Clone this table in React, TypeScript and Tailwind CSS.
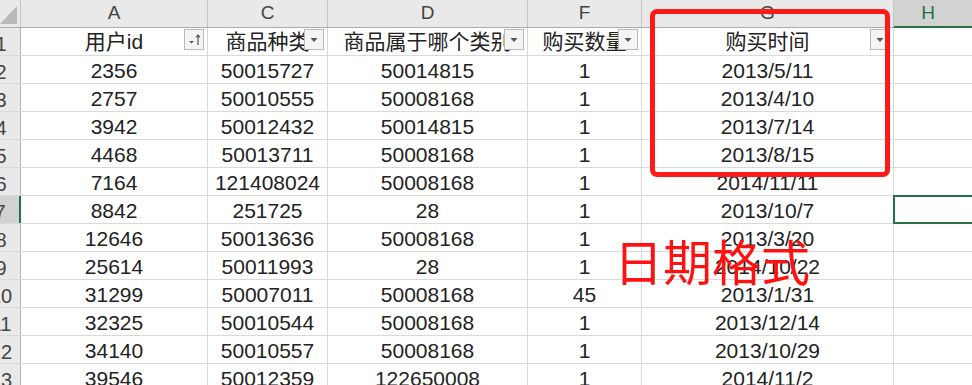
import React from 'react';

const font = { fontFamily: '"Liberation Sans", "Noto Sans CJK SC", sans-serif' };

const headers = ['用户id', '商品种类', '商品属于哪个类别', '购买数量', '购买时间'];

const rows: string[][] = [
  ['2356', '50015727', '50014815', '1', '2013/5/11'],
  ['2757', '50010555', '50008168', '1', '2013/4/10'],
  ['3942', '50012432', '50014815', '1', '2013/7/14'],
  ['4468', '50013711', '50008168', '1', '2013/8/15'],
  ['7164', '121408024', '50008168', '1', '2014/11/11'],
  ['8842', '251725', '28', '1', '2013/10/7'],
  ['12646', '50013636', '50008168', '1', '2013/3/20'],
  ['25614', '50011993', '28', '1', '2014/10/22'],
  ['31299', '50007011', '50008168', '45', '2013/1/31'],
  ['32325', '50010544', '50008168', '1', '2013/12/14'],
  ['34140', '50010557', '50008168', '1', '2013/10/29'],
  ['39546', '50012359', '122650008', '1', '2014/11/2'],
];

// column widths incl. right gridline
const colW = ['w-[187px]', 'w-[120px]', 'w-[200px]', 'w-[114px]', 'w-[252px]'];
const letters = ['A', 'C', 'D', 'F', 'G'];

function FilterButton({ sorted }: { sorted?: boolean }) {
  return (
    <span className="absolute right-[3px] top-[1px] w-[20px] h-[21px] border border-[#b9b9b9] bg-[#f4f4f4] flex items-center justify-center">
      <svg width="18" height="19" viewBox="0 0 18 19">
        {sorted ? (
          <>
            <path d="M4 11 L9 11 L6.5 13.5 Z" fill="#555" />
            <path d="M13 15 V5 M11 7.5 L13 5 L15 7.5" stroke="#555" strokeWidth="1.2" fill="none" />
          </>
        ) : (
          <path d="M5.5 8 L12.5 8 L9 12 Z" fill="#555" />
        )}
      </svg>
    </span>
  );
}

function RowHead({ n, active }: { n: number; active?: boolean }) {
  return (
    <div
      className={
        'w-[21px] h-full shrink-0 overflow-hidden flex justify-end items-end border-r ' +
        (active ? 'bg-[#d2d2d2] border-r-2 border-[#217346]' : 'bg-[#e9e9e9] border-[#b4b4b4]')
      }
    >
      <span className="w-[38px] shrink-0 text-center text-[20px] leading-[22px] text-[#444]">{n}</span>
    </div>
  );
}

export default function App() {
  return (
    <div className="relative w-[972px] h-[385px] overflow-hidden bg-white text-[#222]" style={font}>
      {/* column letters */}
      <div className="flex h-[28px] border-b border-[#ababab] bg-[#e9e9e9]">
        <div className="w-[21px] shrink-0 border-r border-[#c6c6c6] relative">
          <svg className="absolute left-0 top-0" width="20" height="27" viewBox="0 0 20 27">
            <path d="M0 24 L17 24 L17 6 Z" fill="#b9b9b9" />
          </svg>
        </div>
        {letters.map((l, i) => (
          <div
            key={l}
            className={colW[i] + ' shrink-0 border-r border-[#c6c6c6] flex items-center justify-center text-[19px] text-[#444]'}
          >
            {l}
          </div>
        ))}
        <div className="flex-1 bg-[#d2d2d2] border-b-2 border-[#217346] -mb-[1px] flex items-center justify-center text-[19px] text-[#217346]">
          <span className="-ml-[10px]">H</span>
        </div>
      </div>

      {/* header row */}
      <div className="flex h-[28px] border-b border-[#d9d9d9]">
        <RowHead n={1} />
        {headers.map((h, i) => (
          <div
            key={h}
            className={colW[i] + ' shrink-0 relative border-r border-[#d9d9d9] flex items-end justify-center text-[21px] leading-[24px] overflow-hidden whitespace-nowrap'}
          >
            <span className="mb-[1px]">{h}</span>
            <FilterButton sorted={i === 0} />
          </div>
        ))}
        <div className="flex-1" />
      </div>

      {rows.map((r, ri) => (
        <div key={ri} className="flex h-[28px] border-b border-[#d9d9d9]">
          <RowHead n={ri + 2} active={ri + 2 === 7} />
          {r.map((v, ci) => (
            <div
              key={ci}
              className={colW[ci] + ' shrink-0 border-r border-[#d9d9d9] flex items-end justify-center text-[21px] leading-[22px] pb-[1px] whitespace-nowrap'}
            >
              {v}
            </div>
          ))}
          <div className="flex-1 relative">
            {ri + 2 === 7 && (
              <span className="absolute -left-[1px] -top-[1px] -right-[4px] -bottom-[1px] border-2 border-[#217346]" />
            )}
          </div>
        </div>
      ))}

      {/* annotation */}
      <div className="absolute left-[650px] top-[9px] w-[240px] h-[168px] border-[5px] border-[#ff1a1a] rounded-[7px]" />
      <div className="absolute left-[614px] top-[235px] text-[49px] leading-none text-[#ff1111]" style={{ fontFamily: '"Noto Sans CJK SC", sans-serif' }}>
        日期格式
      </div>
    </div>
  );
}
